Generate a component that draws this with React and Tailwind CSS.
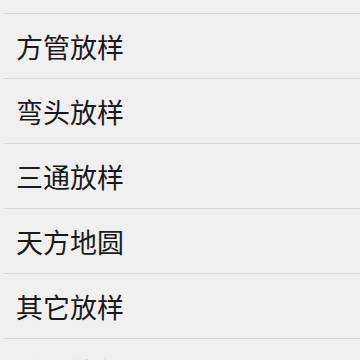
const items = ["方管放样", "弯头放样", "三通放样", "天方地圆", "其它放样", "关于软件"];

export default function App() {
  return (
    <div className="w-[360px] h-[360px] overflow-hidden bg-[#f0f0f0] font-['Noto_Sans_CJK_SC',sans-serif]">
      <div className="h-[14px] ml-[4px] border-b border-[#d8d8d8]" />
      {items.map((t) => (
        <div key={t} className="ml-[4px] h-[65px] border-b border-[#d8d8d8] flex items-center">
          <span className="pl-[12px] text-[27px] leading-none text-[#1a1a1a]">{t}</span>
        </div>
      ))}
    </div>
  );
}
